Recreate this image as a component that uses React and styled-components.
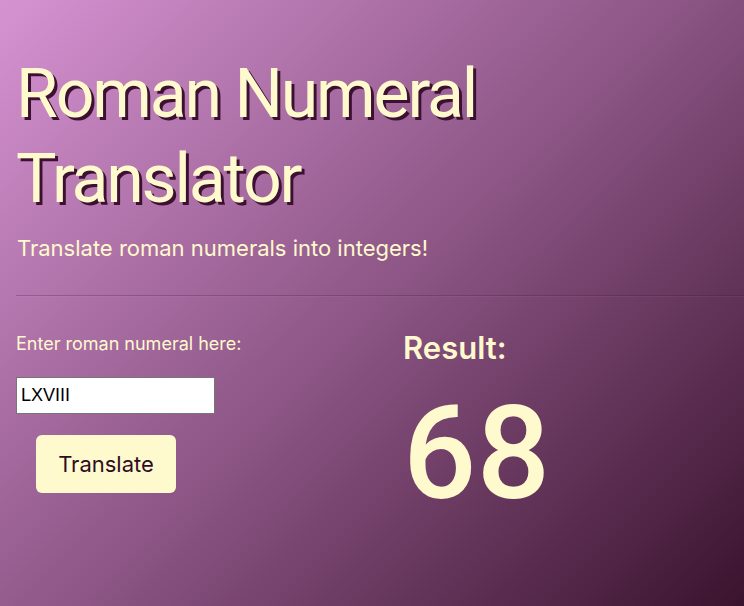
import React, { useState } from "react"
import styled, { createGlobalStyle } from "styled-components"

const GlobalStyle = createGlobalStyle`
  html, body {
    margin: 0;
    padding: 0;
  }
  body {
    font-family: Inter, "Noto Sans", sans-serif;
    min-height: 100vh;
    background: linear-gradient(135deg, #d693d2 0%, #8d5686 50%, #3a132e 100%);
    background-attachment: fixed;
    overflow: hidden;
  }
`

const Page = styled.div`
  min-height: 606px;
  padding: 52px 0 0 16px;
  box-sizing: border-box;
  color: #fffacd;
`

const Header = styled.header`
  padding-bottom: 33px;
`

const Title = styled.h1`
  margin: 0;
  font-family: Roboto, Inter, sans-serif;
  font-size: 68px;
  font-weight: 400;
  line-height: 85px;
  letter-spacing: -2.2px;
  text-shadow: 3px 3px 0 #3b1030;
`

const Subtitle = styled.p`
  margin: 12px 0 0 1px;
  font-size: 22px;
  line-height: 28px;
`

const Divider = styled.hr`
  margin: 0;
  border: none;
  border-top: 1px solid rgba(60, 20, 55, 0.25);
  border-bottom: 1px solid rgba(255, 255, 255, 0.04);
`

const Columns = styled.main`
  display: grid;
  grid-template-columns: 387px 1fr;
  padding-top: 34px;
`

const Form = styled.div`
  display: flex;
  flex-direction: column;
  align-items: flex-start;
`

const Label = styled.label`
  font-size: 18px;
  line-height: 22px;
  margin-top: 2px;
`

const Input = styled.input`
  margin-top: 22px;
  width: 199px;
  height: 37px;
  box-sizing: border-box;
  padding: 2px 4px;
  border: 1px solid #767676;
  background: #fff;
  font-family: "Liberation Sans", Arial, sans-serif;
  font-size: 18px;
  color: #000;
`

const Button = styled.button`
  margin: 21px 0 0 20px;
  width: 140px;
  height: 58px;
  border: none;
  border-radius: 6px;
  background: #fffacd;
  color: #2e0c26;
  font-family: Inter, "Noto Sans", sans-serif;
  font-size: 22px;
  cursor: pointer;
`

const ResultBox = styled.section`
  display: flex;
  flex-direction: column;
`

const ResultLabel = styled.h2`
  margin: 0;
  font-size: 31px;
  font-weight: 600;
  line-height: 34px;
`

const ResultValue = styled.div`
  margin-top: 14px;
  font-family: Roboto, Inter, sans-serif;
  font-size: 129px;
  line-height: 150px;
  font-weight: 500;
  letter-spacing: 0.5px;
`

const App = () => {
  const [value, setValue] = useState("LXVIII")
  return (
    <>
      <GlobalStyle />
      <Page>
        <Header>
          <Title>
            Roman Numeral
            <br />
            Translator
          </Title>
          <Subtitle>Translate roman numerals into integers!</Subtitle>
        </Header>
        <Divider />
        <Columns>
          <Form>
            <Label htmlFor="numeral">Enter roman numeral here:</Label>
            <Input
              id="numeral"
              value={value}
              onChange={(e) => setValue(e.target.value)}
            />
            <Button>Translate</Button>
          </Form>
          <ResultBox>
            <ResultLabel>Result:</ResultLabel>
            <ResultValue>68</ResultValue>
          </ResultBox>
        </Columns>
      </Page>
    </>
  )
}

export default App
